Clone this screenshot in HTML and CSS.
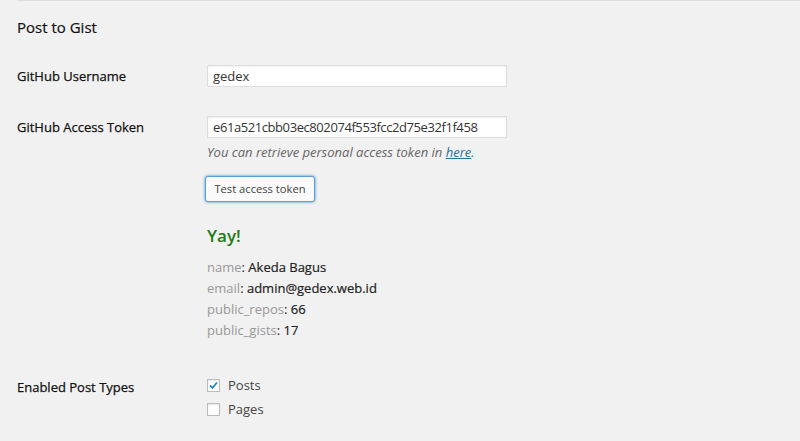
FILE: index.html
```html
<!DOCTYPE html>
<html>
<head>
<meta charset="utf-8">
<link rel="stylesheet" href="styles.css">
</head>
<body>
<div class="wrap">
  <h3 class="title">Post to Gist</h3>
  <div class="row row-user">
    <div class="label">GitHub Username</div>
    <div class="field"><div class="input">gedex</div></div>
  </div>
  <div class="row row-token">
    <div class="label">GitHub Access Token</div>
    <div class="field">
      <div class="input token">e61a521cbb03ec802074f553fcc2d75e32f1f458</div>
      <p class="desc">You can retrieve personal access token in <a href="#">here</a>.</p>
      <button class="button">Test access token</button>
      <div class="yay">Yay!</div>
      <ul class="info">
        <li><span class="k">name</span>: <b>Akeda Bagus</b></li>
        <li><span class="k">email</span>: <b>admin@gedex.web.id</b></li>
        <li><span class="k">public_repos</span>: <b>66</b></li>
        <li><span class="k">public_gists</span>: <b>17</b></li>
      </ul>
    </div>
  </div>
  <div class="row row-types">
    <div class="label">Enabled Post Types</div>
    <div class="field">
      <label class="check"><span class="box checked"><svg viewBox="0 0 13 13" width="13" height="13"><path d="M3 6.5 L5.5 9 L10 3.5" fill="none" stroke="#1e8cbe" stroke-width="1.8"/></svg></span>Posts</label>
      <label class="check"><span class="box"></span>Pages</label>
    </div>
  </div>
</div>
</body>
</html>
```
FILE: styles.css
```css
html, body {
  margin: 0;
  padding: 0;
  background: #f1f1f1;
}
body {
  font-family: "Open Sans", "Noto Sans", sans-serif;
  font-size: 13px;
  color: #444;
  width: 800px;
  height: 441px;
  overflow: hidden;
}
.wrap {
  margin-left: 17px;
  border-top: 1px solid #dedede;
}
.title {
  margin: 0;
  padding-top: 16px;
  font-size: 15px;
  line-height: 20px;
  font-weight: 400;
  color: #111;
  -webkit-text-stroke: 0.2px #111;
}
.row {
  display: flex;
  align-items: flex-start;
}
.label {
  width: 190px;
  flex: none;
  font-weight: 400;
  color: #111;
  line-height: 22px;
  -webkit-text-stroke: 0.25px #111;
}
.row-user {
  margin-top: 28px;
}
.row-token {
  margin-top: 29px;
}
.row-types {
  margin-top: 32px;
}
.row-types .label {
  padding-top: 3px;
}
.input {
  width: 288px;
  height: 20px;
  line-height: 20px;
  padding: 0 5px;
  background: #fff;
  border: 1px solid #ddd;
  box-shadow: inset 0 1px 2px rgba(0,0,0,0.07);
  color: #333;
}
.token {
  letter-spacing: -0.42px;
}
.desc {
  margin: 4px 0 0;
  font-style: italic;
  color: #666;
  line-height: 20px;
}
.desc a {
  color: #21759b;
}
.button {
  margin-top: 14px;
  margin-left: -2px;
  height: 26px;
  width: 110px;
  padding: 0 0 1px;
  font-family: inherit;
  font-size: 11.2px;
  color: #444;
  background: #fafafa;
  border: 1px solid #5b9dd9;
  border-radius: 3px;
  box-shadow: 0 0 3px rgba(0,115,170,0.8);
  display: block;
}
.yay {
  margin-top: 22px;
  font-size: 17px;
  font-weight: 600;
  color: #237a14;
  line-height: 24px;
}
.info {
  list-style: none;
  margin: 9px 0 0;
  padding: 0;
}
.info li {
  line-height: 21px;
  color: #222;
}
.info .k {
  color: #999;
}
.info b {
  font-weight: 400;
  color: #222;
  -webkit-text-stroke: 0.2px #222;
}
.check {
  display: flex;
  align-items: center;
  height: 24px;
  color: #444;
}
.box {
  width: 11px;
  height: 11px;
  border: 1px solid #bbb;
  background: #fff;
  box-shadow: inset 0 1px 2px rgba(0,0,0,0.1);
  margin-right: 8px;
  position: relative;
}
.box svg {
  position: absolute;
  left: -1px;
  top: -1px;
}
```
